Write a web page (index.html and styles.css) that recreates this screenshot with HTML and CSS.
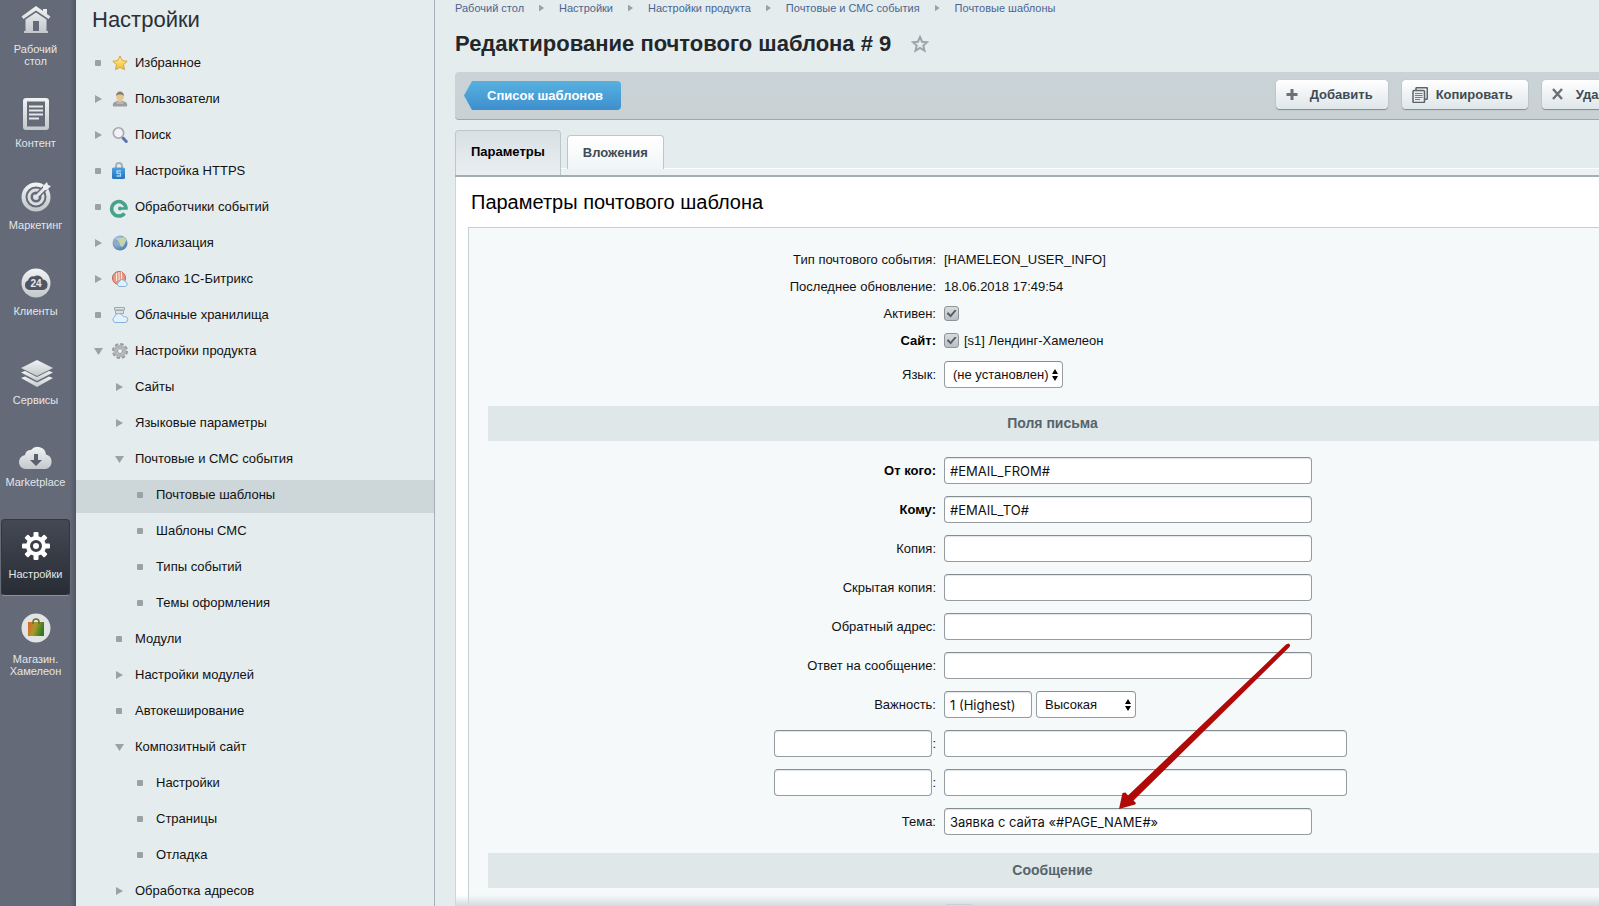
FILE: index.html
```html
<!DOCTYPE html>
<html lang="ru">
<head>
<meta charset="utf-8">
<title>Редактирование почтового шаблона # 9</title>
<link rel="stylesheet" href="styles.css">
</head>
<body>
<svg class="defs" width="0" height="0" aria-hidden="true">
  <defs>
    <linearGradient id="metal" x1="0" y1="0" x2="0" y2="1"><stop offset="0" stop-color="#f1f3f4"/><stop offset="1" stop-color="#c3c8cb"/></linearGradient>
    <linearGradient id="bag" x1="0" y1="0" x2="1" y2="0.3"><stop offset="0" stop-color="#e2602a"/><stop offset="0.5" stop-color="#a99a2a"/><stop offset="1" stop-color="#2f7d22"/></linearGradient>
    <linearGradient id="gold" x1="0" y1="0" x2="0" y2="1"><stop offset="0" stop-color="#fff3a0"/><stop offset="1" stop-color="#f2bd2e"/></linearGradient>
    <linearGradient id="lock" x1="0" y1="0" x2="0" y2="1"><stop offset="0" stop-color="#4da0e0"/><stop offset="1" stop-color="#2673bd"/></linearGradient>
    <radialGradient id="globe" cx="0.35" cy="0.3" r="0.8"><stop offset="0" stop-color="#b9d3ee"/><stop offset="1" stop-color="#4676ae"/></radialGradient>
  </defs>
</svg>
<div class="app">
  <nav class="rail" aria-label="Разделы">
    <a class="rail-item" href="#"><svg width="34" height="34" viewBox="0 0 34 34"><path fill="url(#metal)" d="M17 3 2.500 13.500 4.500 16 17 7.500 29.500 16 31.500 13.500 28 11V6h-4v2zM17 9.500 6.500 16.500V28H5v2h24v-2h-1.500V16.500zM14 18h6v10h-6z" fill-rule="evenodd"/></svg><span>Рабочий<br>стол</span></a>
    <a class="rail-item" href="#"><svg width="34" height="34" viewBox="0 0 34 34"><path fill="url(#metal)" fill-rule="evenodd" d="M7 1h20a3 3 0 0 1 3 3v26a3 3 0 0 1-3 3H7a3 3 0 0 1-3-3V4a3 3 0 0 1 3-3zM8 4.500v25h18v-25z"/><path stroke="#e4e7e9" stroke-width="2" d="M10 9.500h14M10 13.500h14M10 17.500h14M10 21.500h10"/></svg><span>Контент</span></a>
    <a class="rail-item" href="#"><svg width="34" height="34" viewBox="0 0 34 34"><circle cx="17" cy="18" r="12.500" fill="none" stroke="url(#metal)" stroke-width="4"/><circle cx="17" cy="18" r="7" fill="none" stroke="#dde0e2" stroke-width="3"/><circle cx="17" cy="18" r="3" fill="#dde0e2"/><path stroke="#646a77" stroke-width="6" d="M18 17 29 6"/><path stroke="#e4e7e9" stroke-width="3" d="M17 18 27 8"/><path fill="#eceeef" d="M24 7l4-4 1 3 3 1-4 4-4 0z"/></svg><span>Маркетинг</span></a>
    <a class="rail-item rail-gap-sm" href="#"><svg width="34" height="34" viewBox="0 0 34 34"><circle cx="17" cy="18" r="14.500" fill="url(#metal)"/><path fill="#4f5562" d="M10 25a5 5 0 0 1-1-9.500 5 5 0 0 1 6-4 6 6 0 0 1 9 3 5.300 5.300 0 0 1 0 10.500z"/><text class="badge-24" x="17" y="22" text-anchor="middle">24</text></svg><span>Клиенты</span></a>
    <a class="rail-item rail-gap-md" href="#"><svg width="34" height="34" viewBox="0 0 34 34"><g fill="url(#metal)"><path d="M18 6 34 14 18 22 2 14z"/><path d="M2 18.500 6 17l12 6 12-6 4 1.500L18 27z"/><path d="M2 24 6 22.500l12 6 12-6L34 24 18 33z"/></g></svg><span>Сервисы</span></a>
    <a class="rail-item" href="#"><svg width="34" height="34" viewBox="0 0 34 34"><path fill="url(#metal)" d="M8 33a7 7 0 0 1-2-14 6 6 0 0 1 6-5 8.500 8.500 0 0 1 15 4.500A7.500 7.500 0 0 1 27 33z"/><path fill="#5a606d" d="M15 18h4v6h4l-6 6-6-6h4z"/></svg><span>Marketplace</span></a>
    <a class="rail-item rail-gap-lg active" href="#" aria-current="page"><svg width="34" height="34" viewBox="0 0 34 34"><g fill="#fff"><rect x="14.500" y="4" width="5" height="28" rx="1"/><rect x="14.500" y="4" width="5" height="28" rx="1" transform="rotate(45 17 18)"/><rect x="14.500" y="4" width="5" height="28" rx="1" transform="rotate(90 17 18)"/><rect x="14.500" y="4" width="5" height="28" rx="1" transform="rotate(135 17 18)"/><circle cx="17" cy="18" r="10"/></g><circle cx="17" cy="18" r="4.500" fill="#fff" stroke="#3b3f49" stroke-width="3"/></svg><span>Настройки</span></a>
    <a class="rail-item rail-gap-xs" href="#"><svg width="34" height="34" viewBox="0 0 34 34"><circle cx="17" cy="15" r="14.500" fill="#e2e4e4"/><path fill="url(#bag)" d="M9 9h16v14H9z"/><path d="M14 11V9a3 3 0 0 1 6 0v2" fill="none" stroke="#5f7038" stroke-width="1.500"/></svg><span>Магазин.<br>Хамелеон</span></a>
  </nav>

  <aside class="sidebar">
    <h2 class="sidebar-title">Настройки</h2>
    <ul class="menu">
      <li><a href="#"><i class="dot"></i><svg viewBox="0 0 16 16"><path fill="url(#gold)" stroke="#d9a33c" stroke-linejoin="round" d="m8 1 2.200 4.600 5 .7-3.700 3.400 1 5L8 12.300l-4.500 2.400 1-5L.8 6.300l5-.7z"/></svg>Избранное</a></li>
      <li><a href="#"><i class="right"></i><svg viewBox="0 0 16 16"><path fill="#9a9da3" d="M1 15.500c-1-4 2-5 4.500-5.500h5c2.500.500 5.500 1.500 4.500 5.500z"/><path fill="#bcb6ab" d="M4 10.500h8l-1 2.500H5z"/><ellipse cx="8" cy="6" rx="3.800" ry="5" fill="#e6c794"/><path fill="#8a7d6b" d="M4 5c0-6 8-6 8 0-2-2-6-2-8 0z"/></svg>Пользователи</a></li>
      <li><a href="#"><i class="right"></i><svg viewBox="0 0 16 16"><path stroke="#5573b0" stroke-width="3" stroke-linecap="round" d="m11 11 3.300 3.500"/><circle cx="6.500" cy="6" r="5.200" fill="#f0f2f8" stroke="#a9a5aa" stroke-width="1.600"/></svg>Поиск</a></li>
      <li><a href="#"><i class="dot"></i><svg viewBox="0 0 16 16"><path fill="none" stroke="#a4b0ba" stroke-width="2" d="M4 6V3a3 3 0 0 1 6 0v3"/><rect x="0" y="4.500" width="13" height="11.500" rx="1.500" fill="url(#lock)"/><path fill="none" stroke="#a8d6f5" stroke-width="1.300" d="M9 8H5v2.300h3.500V13H4.500"/></svg>Настройка HTTPS</a></li>
      <li><a href="#"><i class="dot"></i><svg viewBox="0 0 16 16"><path fill="none" stroke="#46a28b" stroke-width="3.500" d="M12.500 14.300A7.200 7.200 0 1 1 14 9"/><path fill="none" stroke="#46a28b" stroke-width="2.500" d="M15.700 9.500H9"/><circle cx="8" cy="9.500" r="2" fill="#46a28b"/></svg>Обработчики событий</a></li>
      <li><a href="#"><i class="right"></i><svg viewBox="0 0 16 16"><circle cx="8" cy="8" r="7.500" fill="url(#globe)"/><path fill="#c5d7a8" d="m8 3 4-1 2.500 3-2 4-2 3-2-1-1-4-2-1z"/><path fill="#8fabc0" d="M2 4l4 1 1 3-3 4-3-4z"/></svg>Локализация</a></li>
      <li><a href="#"><i class="right"></i><svg viewBox="0 0 16 16"><circle cx="7" cy="7" r="6.500" fill="#e79a88" stroke="#c8604c"/><path stroke="#fbe9e2" d="M4.500 2v8M7 1v8M9.500 1v7"/><path fill="#e3f1fc" stroke="#85b3dc" d="M7 15.500a2.500 2.500 0 0 1 0-4.500 3.200 3.200 0 0 1 6-.5 2.600 2.600 0 0 1 .5 5z"/></svg>Облако 1С-Битрикс</a></li>
      <li><a href="#"><i class="dot"></i><svg viewBox="0 0 16 16"><path fill="#dfe2e5" stroke="#9fa8b0" d="M2.500.500h10V3h-10zM3.500 3.500h8v3h-8z"/><path fill="#e3f1fc" stroke="#85b3dc" d="M3 15.500A3 3 0 0 1 2.500 10q.5-3.500 4-3.500t5 3h1a3 3 0 0 1 .5 6z"/></svg>Облачные хранилища</a></li>
      <li><a href="#"><i class="down"></i><svg viewBox="0 0 16 16"><circle cx="8" cy="8" r="7" fill="none" stroke="#969a9e" stroke-width="2" stroke-dasharray="3.500 2"/><circle cx="8" cy="8" r="4.800" fill="#d8dcde" stroke="#b0b4b7" stroke-width="3"/><circle cx="8" cy="8" r="2.500" fill="#edf1f2" stroke="#94989c"/></svg>Настройки продукта</a></li>
      <li class="level-2"><a href="#"><i class="right"></i>Сайты</a></li>
      <li class="level-2"><a href="#"><i class="right"></i>Языковые параметры</a></li>
      <li class="level-2"><a href="#"><i class="down"></i>Почтовые и СМС события</a></li>
      <li class="level-3"><a class="current" href="#"><i class="dot"></i>Почтовые шаблоны</a></li>
      <li class="level-3"><a href="#"><i class="dot"></i>Шаблоны СМС</a></li>
      <li class="level-3"><a href="#"><i class="dot"></i>Типы событий</a></li>
      <li class="level-3"><a href="#"><i class="dot"></i>Темы оформления</a></li>
      <li class="level-2"><a href="#"><i class="dot"></i>Модули</a></li>
      <li class="level-2"><a href="#"><i class="right"></i>Настройки модулей</a></li>
      <li class="level-2"><a href="#"><i class="dot"></i>Автокеширование</a></li>
      <li class="level-2"><a href="#"><i class="down"></i>Композитный сайт</a></li>
      <li class="level-3"><a href="#"><i class="dot"></i>Настройки</a></li>
      <li class="level-3"><a href="#"><i class="dot"></i>Страницы</a></li>
      <li class="level-3"><a href="#"><i class="dot"></i>Отладка</a></li>
      <li class="level-2"><a href="#"><i class="right"></i>Обработка адресов</a></li>
    </ul>
  </aside>

  <main class="main">
    <nav class="crumbs" aria-label="Путь">
      <a href="#">Рабочий стол</a><i></i><a href="#">Настройки</a><i></i><a href="#">Настройки продукта</a><i></i><a href="#">Почтовые и СМС события</a><i></i><a href="#">Почтовые шаблоны</a>
    </nav>
    <h1 class="page-title">Редактирование почтового шаблона # 9
      <svg width="18" height="18" viewBox="0 0 18 18" aria-hidden="true"><path fill="none" stroke="#9da5ab" stroke-width="2" d="m9 2 2.100 4.700 5 .5-3.800 3.400 1.200 5L9 13l-4.500 2.600 1.200-5L1.900 7.200l5-.5z"/></svg>
    </h1>

    <div class="toolbar">
      <a class="back" href="#"><span>Список шаблонов</span></a>
      <div class="actions">
        <button type="button" class="btn"><svg width="16" height="16" viewBox="0 0 16 16"><path stroke="#6b7073" stroke-width="3" d="M6 2v11M.5 7.500h11"/></svg>Добавить</button>
        <button type="button" class="btn"><svg width="16" height="16" viewBox="0 0 16 16"><path fill="none" stroke="#5d6366" stroke-width="1.500" d="M4 3V1.500a.8.800 0 0 1 .8-.8h9.700a.8.800 0 0 1 .8.800v10a.8.800 0 0 1-.8.800H13"/><rect x="1" y="3.500" width="11.500" height="12" rx="1" fill="#e7ecee" stroke="#5d6366" stroke-width="1.500"/><path stroke="#777d80" d="M3 6.500h7.500M3 8.500h7.500M3 10.500h7.500M3 12.500h5"/></svg>Копировать</button>
        <button type="button" class="btn"><svg width="16" height="16" viewBox="0 0 16 16"><path stroke="#6b7073" stroke-width="2.400" d="m1 2 9 10M10 2 1 12"/></svg>Удалить</button>
      </div>
    </div>

    <div class="tabs" role="tablist">
      <button type="button" class="tab selected" role="tab" aria-selected="true">Параметры</button>
      <button type="button" class="tab" role="tab" aria-selected="false">Вложения</button>
    </div>

    <form class="panel">
      <h2 class="panel-title">Параметры почтового шаблона</h2>
      <div class="fields">
        <div class="summary">
          <div class="row"><span class="label">Тип почтового события:</span><span>[HAMELEON_USER_INFO]</span></div>
          <div class="row"><span class="label">Последнее обновление:</span><span>18.06.2018 17:49:54</span></div>
          <div class="row"><label class="label" for="active">Активен:</label><input class="check" type="checkbox" id="active" checked></div>
          <div class="row"><span class="label strong">Сайт:</span><span class="control"><input class="check" type="checkbox" id="site" checked><label for="site">[s1] Лендинг-Хамелеон</label></span></div>
        </div>
        <div class="row"><label class="label" for="lang">Язык:</label><span class="select w-lang"><select id="lang"><option>(не установлен)</option></select><svg width="6" height="12" viewBox="0 0 6 12"><path d="M0 5 3 0l3 5zM0 7l3 5 3-5z"/></svg></span></div>

        <h3 class="section">Поля письма</h3>

        <div class="row"><label class="label strong" for="from">От кого:</label><input class="text" type="text" id="from" value="#EMAIL_FROM#"></div>
        <div class="row"><label class="label strong" for="to">Кому:</label><input class="text" type="text" id="to" value="#EMAIL_TO#"></div>
        <div class="row"><label class="label" for="cc">Копия:</label><input class="text" type="text" id="cc"></div>
        <div class="row"><label class="label" for="bcc">Скрытая копия:</label><input class="text" type="text" id="bcc"></div>
        <div class="row"><label class="label" for="reply">Обратный адрес:</label><input class="text" type="text" id="reply"></div>
        <div class="row"><label class="label" for="inreply">Ответ на сообщение:</label><input class="text" type="text" id="inreply"></div>
        <div class="row"><label class="label" for="priority">Важность:</label><span class="control tight"><input class="text w-small" type="text" id="priority" value="1 (Highest)"><span class="select w-priority"><select aria-label="Уровень важности"><option>Высокая</option></select><svg width="6" height="12" viewBox="0 0 6 12"><path d="M0 5 3 0l3 5zM0 7l3 5 3-5z"/></svg></span></span></div>
        <div class="row"><span class="label pair"><input class="text w-name" type="text" aria-label="Имя поля 1">:</span><input class="text w-wide" type="text" aria-label="Значение поля 1"></div>
        <div class="row"><span class="label pair"><input class="text w-name" type="text" aria-label="Имя поля 2">:</span><input class="text w-wide" type="text" aria-label="Значение поля 2"></div>
        <div class="row subject"><label class="label" for="subject">Тема:</label><input class="text" type="text" id="subject" value="Заявка с сайта «#PAGE_NAME#»">
          <svg class="arrow" width="172" height="168" viewBox="0 0 172 168" aria-hidden="true"><path fill="#b10808" d="M169.500 1.500q2.500 1 1 3.500L14.500 158.500l2.500 2.500-1 1.500L0 167 3.500 151l3-.5 2.500 3L167 2.500z"/></svg>
        </div>

        <h3 class="section">Сообщение</h3>
        <div class="row last"><span class="label"></span><button type="button" class="chip" aria-label="Формат"></button></div>
      </div>
    </form>
    <div class="bottom-shade"></div>
  </main>
</div>
</body>
</html>
```
FILE: styles.css
```css
* { box-sizing: border-box; }
body {
  margin: 0;
  font: 13px/16px "Liberation Sans", Arial, sans-serif;
  color: #111;
  background: #e4ecee;
}
a { color: inherit; text-decoration: none; }
h1, h2, h3, ul { margin: 0; padding: 0; }
.defs { position: absolute; }

.app { display: flex; height: 100vh; overflow: hidden; }

/* Section rail */
.rail {
  flex: none;
  width: 76px;
  display: flex;
  flex-direction: column;
  gap: 5px;
  padding-right: 6px;
  background: linear-gradient(to right, #646a77 70px, #515766);
}
.rail-item {
  flex: none;
  margin-left: 1px;
  padding: 8px 0 15px;
  border: 1px solid transparent;
  border-radius: 4px;
  display: flex;
  flex-direction: column;
  align-items: center;
  gap: 6px;
  font-size: 11px;
  line-height: 12px;
  text-align: center;
  color: #e3e6ea;
}
.rail-item svg { overflow: visible; }
.rail-item:first-child { padding-top: 2px; }
.rail-gap-xs { margin-top: 3px; }
.rail-gap-sm { margin-top: 4px; }
.rail-gap-md { margin-top: 7px; }
.rail-gap-lg { margin-top: 10px; }
.rail-item.active {
  background: linear-gradient(#454954, #282c34);
  border-color: #33373f #33373f #8b909a;
}
.badge-24 { font: bold 10px "Liberation Sans", Arial, sans-serif; fill: #e6e9eb; }

/* Menu tree */
.sidebar {
  flex: none;
  width: 359px;
  border-right: 1px solid #a6afba;
}
.sidebar-title {
  padding: 7px 16px 15px;
  font-size: 22px;
  line-height: 26px;
  font-weight: normal;
  color: #2b3036;
}
.menu { list-style: none; }
.menu li { padding-bottom: 3px; }
.menu a {
  display: flex;
  align-items: center;
  height: 33px;
  padding: 0 0 3px 16px;
  color: #111;
}
.menu svg { width: 16px; height: 16px; margin-right: 7px; overflow: visible; }
.menu i { flex: none; width: 12px; height: 8px; margin-right: 8px; display: flex; }
.menu i::before { content: ""; margin-left: 3px; background: #9aa2a6; }
.menu .dot { align-items: center; }
.menu .dot::before { width: 6px; height: 6px; border-radius: 1px; }
.menu .right::before { width: 7px; height: 8px; clip-path: polygon(0 0, 100% 50%, 0 100%); }
.menu .down { align-items: flex-end; }
.menu .down::before { width: 9px; height: 7px; margin-left: 2px; clip-path: polygon(0 0, 100% 0, 50% 100%); }
.menu .level-2 a { padding-left: 37px; }
.menu .level-2 i, .menu .level-3 i { margin-right: 10px; }
.menu .level-3 a { padding-left: 58px; }
.menu .current { background: #cdd6d9; }

/* Content; runs past the right edge of the window */
.main {
  flex: 1;
  min-width: 0;
  margin-right: -50px;
  padding-left: 20px;
}
.crumbs {
  display: flex;
  align-items: center;
  height: 16px;
  font-size: 11px;
  color: #4b6590;
}
.crumbs i {
  width: 5px;
  height: 7px;
  margin: 0 15px;
  background: #9aa2a8;
  clip-path: polygon(0 0, 100% 50%, 0 100%);
}
.page-title {
  display: flex;
  align-items: center;
  gap: 20px;
  padding: 14px 0 15px;
  font-size: 22px;
  line-height: 27px;
  color: #22272c;
}

.toolbar {
  display: flex;
  align-items: flex-start;
  justify-content: space-between;
  height: 48px;
  padding: 8px 5px 0 9px;
  border-bottom: 1px solid #9da8ae;
  border-radius: 4px 0 0 4px;
  background: linear-gradient(#cad3d7, #c9d1d4);
}
.back {
  margin-top: 1px;
  height: 29px;
  padding: 0 18px 0 23px;
  border-radius: 0 4px 4px 0;
  clip-path: polygon(0 50%, 8px 0, 100% 0, 100% 100%, 8px 100%);
  background: linear-gradient(#57b1e0, #3e8fcd);
  font: bold 13px/29px "Liberation Sans", Arial, sans-serif;
  color: #fff;
}
.actions { display: flex; gap: 14px; }
.btn {
  display: flex;
  align-items: center;
  gap: 8px;
  height: 29px;
  padding: 0 15px 0 10px;
  border: 0;
  border-radius: 4px;
  background: linear-gradient(#fff, #dfe6e9);
  box-shadow: 0 1px 1px #7f8a90, 0 0 1px #9aa5ab;
  font: bold 13px/16px "Liberation Sans", Arial, sans-serif;
  color: #3f4b54;
}

.tabs {
  display: flex;
  align-items: flex-end;
  gap: 6px;
  margin-top: 11px;
  height: 46px;
  border-bottom: 2px solid #a3adb2;
  padding-bottom: 6px;
  background: linear-gradient(to top, #ecf2f4 6px, #fff 6px, #fff 7px, transparent 7px);
}
.tab {
  height: 34px;
  padding: 0 15px;
  border: 1px solid #bcc7cc;
  border-bottom: 0;
  border-radius: 4px 4px 0 0;
  background: linear-gradient(#fff, #f1f5f7);
  font: bold 13px/32px "Liberation Sans", Arial, sans-serif;
  color: #3f4b54;
}
.tab.selected {
  height: 45px;
  margin-bottom: -6px;
  padding-bottom: 2px;
  background: linear-gradient(#d9e0e3, #e9eff1);
  color: #000;
}

.panel {
  padding: 13px 12px 0;
  border-left: 1px solid #ccd5d8;
  background: #fff;
}
.panel-title {
  padding-left: 3px;
  margin-bottom: 13px;
  font-size: 20px;
  line-height: 24px;
  font-weight: normal;
  color: #000;
}
.fields {
  padding: 18px 19px;
  border: 1px solid #c5cfd3;
  background: #f5f9fa;
}
.row {
  display: flex;
  align-items: center;
  min-height: 39px;
}
.summary { padding-bottom: 1px; }
.summary .row { min-height: 27px; }
.label {
  flex: none;
  width: 448px;
  margin-right: 8px;
  text-align: right;
}
.strong { font-weight: bold; color: #000; }
.pair { display: flex; justify-content: flex-end; align-items: center; }
.control { display: flex; align-items: center; gap: 5px; }
.tight { gap: 4px; }
.text, select {
  height: 27px;
  border: 1px solid #959ca2;
  border-top-color: #858c92;
  border-radius: 4px;
  background: #fff;
  color: #111;
}
.text {
  width: 368px;
  padding: 1px 5px 0;
  box-shadow: inset 0 1px 1px #e2e6ea;
  font: 13px/16px Inter, "Liberation Sans", sans-serif;
}
.w-small { width: 88px; }
.w-name { width: 158px; }
.w-wide { width: 403px; }
.select { position: relative; display: flex; }
.select select {
  appearance: none;
  width: 100%;
  padding: 0 8px;
  font: 13px/16px "Liberation Sans", Arial, sans-serif;
}
.select svg { position: absolute; right: 5px; top: 8px; pointer-events: none; }
.w-lang { width: 119px; }
.w-priority { width: 100px; }
.check {
  appearance: none;
  width: 15px;
  height: 15px;
  margin: 0;
  border: 1px solid #8d959b;
  border-radius: 3px;
  display: grid;
  place-items: center;
  background: linear-gradient(#d8dcde, #b9c0c4);
}
.check:checked::before {
  content: "";
  width: 10px;
  height: 8px;
  background: #555d63;
  clip-path: polygon(0 50%, 20% 35%, 40% 65%, 85% 0, 100% 12%, 42% 100%);
}
.section {
  margin: 12px 0 10px;
  line-height: 35px;
  font-size: 14px;
  text-align: center;
  color: #56646b;
  background: #e0e7e9;
}
.subject { position: relative; }
.arrow { position: absolute; left: 631px; bottom: 31px; }
.last { align-items: flex-start; padding-top: 6px; }
.chip { width: 30px; height: 26px; border: 1px solid #858c92; border-radius: 4px; background: #e0e5e7; }
.bottom-shade {
  position: fixed;
  left: 455px;
  right: 0;
  bottom: 0;
  height: 11px;
  background: linear-gradient(rgba(210, 218, 221, 0), #d3dbde);
}
```
